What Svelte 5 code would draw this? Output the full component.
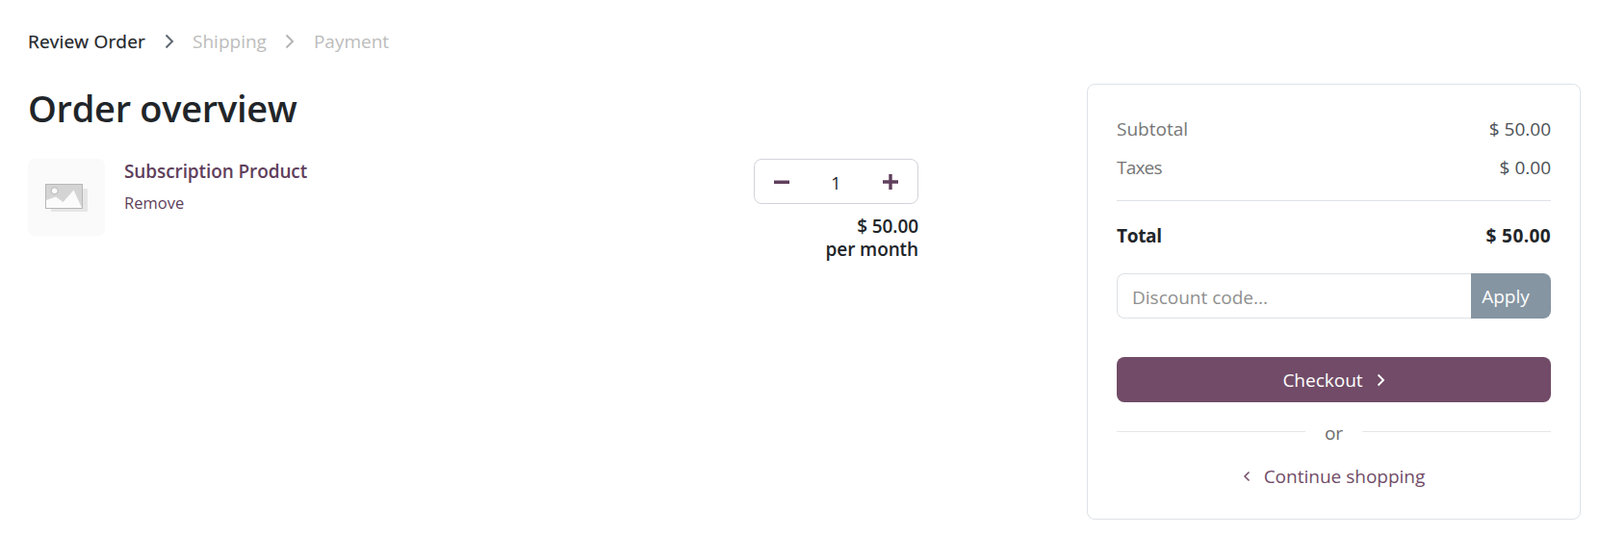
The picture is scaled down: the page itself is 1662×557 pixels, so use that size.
<script>
	const steps = ['Review Order', 'Shipping', 'Payment'];
</script>

<div class="page">
	<main class="main">
		<nav class="steps">
			{#each steps as step, i}
				{#if i > 0}
					<svg class="step-arrow" class:muted={i > 1} width="10" height="16" viewBox="0 0 10 16">
						<path d="M1.5 1.5 8 8l-6.500 6.500" fill="none" stroke="currentColor" stroke-width="1.900" />
					</svg>
				{/if}
				<span class="step" class:active={i === 0}>{step}</span>
			{/each}
		</nav>

		<h1>Order overview</h1>

		<div class="line">
			<div class="thumb">
				<svg width="44" height="29" viewBox="0 0 44 29">
					<rect x="6" y="5" width="38" height="24" fill="#e6e6e6" />
					<rect x="0.5" y="0.5" width="38" height="25" fill="#d4d4d4" stroke="#b8b8b8" />
					<path d="M1 25V17l10-3.500 7.500 5.500 11-12.500L38 25z" fill="#fbfbfb" />
					<circle cx="9.700" cy="7.300" r="3.500" fill="#fbfbfb" stroke="#b8b8b8" />
				</svg>
			</div>
			<div class="info">
				<a class="name" href="#top">Subscription Product</a>
				<a class="remove" href="#top">Remove</a>
			</div>
			<div class="side">
				<div class="qty">
					<button class="qty-btn" aria-label="Remove one">
						<svg width="16" height="16" viewBox="0 0 16 16"><path d="M0 6.500h16v3.500H0z" fill="currentColor" /></svg>
					</button>
					<span class="qty-value">1</span>
					<button class="qty-btn" aria-label="Add one">
						<svg width="16" height="16" viewBox="0 0 16 16"><path d="M6.300 0h3.400v6.300H16v3.400H9.700V16H6.300V9.700H0V6.300h6.300z" fill="currentColor" /></svg>
					</button>
				</div>
				<div class="price">$ 50.00<br />per month</div>
			</div>
		</div>
	</main>

	<aside class="card">
		<div class="row"><span class="label">Subtotal</span><span class="amount">$ 50.00</span></div>
		<div class="row"><span class="label taxes">Taxes</span><span class="amount">$ 0.00</span></div>
		<hr />
		<div class="row total"><span class="total-label">Total</span><span class="total-value">$ 50.00</span></div>
		<div class="discount">
			<input type="text" placeholder="Discount code..." />
			<button class="apply">Apply</button>
		</div>
		<button class="checkout">
			Checkout
			<svg width="9" height="14" viewBox="0 0 9 14"><path d="M1.500 1.500 7 7l-5.500 5.500" fill="none" stroke="currentColor" stroke-width="1.900" /></svg>
		</button>
		<div class="or"><span>or</span></div>
		<a class="continue" href="#top">
			<svg width="8" height="12" viewBox="0 0 8 12"><path d="M6.500 1.500 2 6l4.500 4.500" fill="none" stroke="currentColor" stroke-width="1.500" /></svg>
			Continue shopping
		</a>
	</aside>
</div>

<style>
	:global(body) {
		margin: 0;
		background: #fff;
		color: #212529;
		font-family: "Open Sans", "Noto Sans", sans-serif;
	}

	.page {
		display: flex;
		align-items: flex-start;
		padding: 0 20px 0 29px;
		height: 557px;
		box-sizing: border-box;
	}

	.main {
		width: 925px;
		padding-top: 30px;
	}

	.steps {
		display: flex;
		align-items: center;
		height: 26px;
		font-size: 19px;
		color: #bcbcbc;
	}

	.step.active {
		color: #212529;
		letter-spacing: 0.2px;
		-webkit-text-stroke: 0.25px #212529;
	}

	.step-arrow {
		margin: 0 19.500px;
		color: #5c6670;
	}

	.step-arrow.muted {
		color: #b3b3b3;
	}

	h1 {
		margin: 31px 0 0;
		font-size: 38px;
		line-height: 50px;
		font-weight: 600;
		letter-spacing: -0.300px;
	}

	.line {
		display: flex;
		margin-top: 28px;
	}

	.thumb {
		width: 80px;
		height: 80px;
		border-radius: 7px;
		background: #fafafa;
		display: flex;
		align-items: center;
		justify-content: center;
	}

	.info {
		flex: 1;
		margin-left: 20px;
		display: flex;
		flex-direction: column;
	}

	a {
		text-decoration: none;
	}

	.name {
		color: #5f3f5c;
		font-size: 19px;
		line-height: 26px;
		font-weight: 600;
		letter-spacing: -0.1px;
	}

	.remove {
		color: #5f3f5c;
		margin-top: 9px;
		font-size: 16.500px;
		line-height: 22px;
	}

	.side {
		width: 171px;
		text-align: right;
	}

	.qty {
		height: 47px;
		box-sizing: border-box;
		border: 1px solid #d3d3dc;
		border-radius: 8px;
		display: flex;
		align-items: center;
		justify-content: space-between;
		padding: 0 20px;
	}

	.qty-btn {
		border: 0;
		padding: 0;
		background: none;
		color: #5f3f5c;
		display: flex;
	}

	.qty-value {
		font-size: 18px;
		color: #212529;
		padding-top: 2px;
	}

	.price {
		margin-top: 11px;
		font-size: 19px;
		line-height: 24px;
		font-weight: 600;
		letter-spacing: -0.1px;
	}

	.card {
		margin: 87px 0 0 175px;
		width: 513px;
		height: 453px;
		box-sizing: border-box;
		border: 1px solid #dee2e6;
		border-radius: 8px;
		padding: 26px 30px 0 30px;
		display: flex;
		flex-direction: column;
		font-size: 19px;
	}

	.row {
		display: flex;
		justify-content: space-between;
		height: 40px;
		line-height: 40px;
	}

	.label {
		color: #767676;
	}

	.taxes {
		letter-spacing: -0.800px;
	}

	.amount {
		color: #4b5157;
	}

	hr {
		width: 100%;
		margin: 0;
		margin-top: 14px;
		border: 0;
		border-top: 1px solid #dee2e6;
	}

	.total {
		margin-top: 16px;
		font-weight: 700;
		color: #212529;
	}

	.total-label {
		letter-spacing: -0.300px;
	}

	.total-value {
		letter-spacing: 0.400px;
	}

	.discount {
		display: flex;
		height: 47px;
		margin-top: 19px;
	}

	input {
		flex: 1;
		min-width: 0;
		box-sizing: border-box;
		border: 1px solid #dee2e6;
		border-right: 0;
		border-radius: 8px 0 0 8px;
		padding: 2px 15px 0;
		font: inherit;
		outline: none;
	}

	input::placeholder {
		color: #8f8f8f;
		opacity: 1;
	}

	.apply {
		width: 83px;
		border: 0;
		border-radius: 0 8px 8px 0;
		background: #8595a2;
		color: #fff;
		font: inherit;
		padding: 0 11px 0 0;
	}

	.checkout {
		height: 47px;
		margin-top: 40px;
		border: 0;
		border-radius: 8px;
		background: #714b67;
		color: #fff;
		font: inherit;
		display: flex;
		align-items: center;
		justify-content: center;
		gap: 14px;
		padding-top: 1px;
	}

	.or {
		display: flex;
		align-items: center;
		gap: 20px;
		margin-top: 19px;
		height: 26px;
		color: #6c6c6c;
	}

	.or::before, .or::after {
		content: "";
		flex: 1;
		height: 1px;
		background: #e6e6e6;
		margin-top: -3px;
	}

	.continue {
		display: flex;
		align-items: center;
		justify-content: center;
		gap: 14px;
		margin-top: 19px;
		height: 26px;
		color: #714b67;
	}
</style>
